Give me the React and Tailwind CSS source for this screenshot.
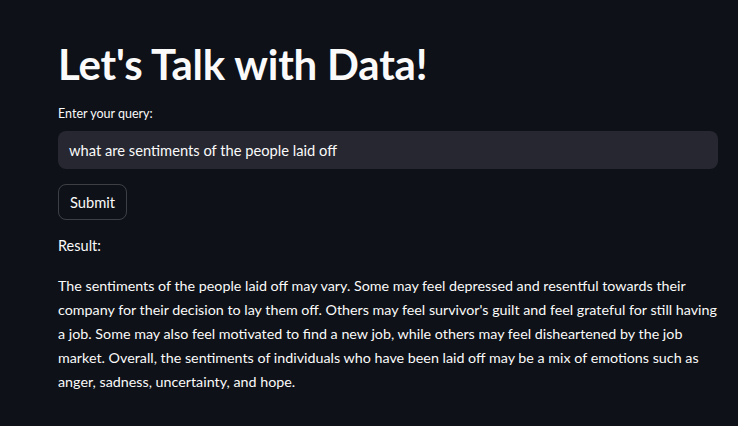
const lines = [
  "The sentiments of the people laid off may vary. Some may feel depressed and resentful towards their",
  "company for their decision to lay them off. Others may feel survivor's guilt and feel grateful for still having",
  "a job. Some may also feel motivated to find a new job, while others may feel disheartened by the job",
  "market. Overall, the sentiments of individuals who have been laid off may be a mix of emotions such as",
  "anger, sadness, uncertainty, and hope.",
];

export default function App() {
  return (
    <div
      className="min-h-screen bg-[#0e1117] text-[#fafafa] pl-[58px] pr-[20px] pt-[40px] pb-10"
      style={{ fontFamily: "Lato, 'Noto Sans', sans-serif" }}
    >
      <h1 className="text-[42px] leading-[48px] font-bold tracking-[-0.2px]">Let's Talk with Data!</h1>

      <label className="block mt-[17px] text-[12.5px] leading-[18px]">Enter your query:</label>
      <div className="mt-[8px] h-[38px] rounded-lg bg-[#262730] flex items-center px-[11px] text-[14.7px]">
        what are sentiments of the people laid off
      </div>

      <button className="mt-[15px] h-[36px] px-[11px] rounded-lg border border-[rgba(250,250,250,0.2)] text-[14.7px]">
        Submit
      </button>

      <p className="mt-[14px] text-[14.5px] leading-6">Result:</p>
      <div className="mt-[16px] text-[14.3px] leading-6">
        {lines.map((l) => (
          <p key={l} className="whitespace-nowrap">{l}</p>
        ))}
      </div>
    </div>
  );
}
